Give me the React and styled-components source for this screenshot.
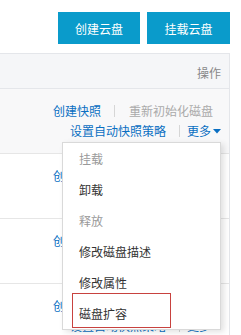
import React from "react";
import styled, { createGlobalStyle } from "styled-components";

const GlobalStyle = createGlobalStyle`
  html, body {
    margin: 0;
    padding: 0;
    background: #fff;
  }
  body {
    font-family: "Noto Sans CJK SC", "Liberation Sans", sans-serif;
    font-size: 12px;
    color: #333;
    overflow: hidden;
  }
`;

const menuItems = [
  { label: "挂载", disabled: true },
  { label: "卸载" },
  { label: "释放", disabled: true },
  { label: "修改磁盘描述" },
  { label: "修改属性" },
  { label: "磁盘扩容", marked: true },
];

function Caret() {
  return (
    <svg width="8" height="5" viewBox="0 0 8 5">
      <path d="M0 0 L8 0 L4 4.5 Z" fill="#0a6fc2" />
    </svg>
  );
}

function DiskRow({ $hover, open }) {
  return (
    <Row $hover={$hover}>
      <OpsCell>
        <Line $pr="8px">
          <Link>创建快照</Link>
          <Sep $ml="13px" $mr="14px" />
          <Muted>重新初始化磁盘</Muted>
        </Line>
        <Line>
          <Link>设置自动快照策略</Link>
          <Sep $ml="13px" $mr="7px" />
          <More>
            <Link>更多</Link>
            <Caret />
            {open && (
              <Menu>
                {menuItems.map((item) => (
                  <MenuItem key={item.label} $disabled={item.disabled}>
                    {item.label}
                    {item.marked && <Mark />}
                  </MenuItem>
                ))}
              </Menu>
            )}
          </More>
        </Line>
      </OpsCell>
    </Row>
  );
}

function App() {
  return (
    <Page>
      <GlobalStyle />
      <Toolbar>
        <Button $w="82px">创建云盘</Button>
        <Button $w="83px">挂载云盘</Button>
      </Toolbar>
      <Table>
        <Header>操作</Header>
        <DiskRow $hover open />
        <DiskRow />
        <DiskRow />
        <DiskRow />
      </Table>
    </Page>
  );
}

const Page = styled.div`
  width: 241px;
  height: 335px;
  overflow: hidden;
  position: relative;
`;

const Toolbar = styled.div`
  display: flex;
  justify-content: flex-end;
  gap: 7px;
  padding: 12px 11px 0 0;
`;

const Button = styled.div`
  width: ${(p) => p.$w};
  height: 32px;
  background: #0a9bcb;
  color: #fff;
  display: flex;
  align-items: center;
  justify-content: center;
  font-size: 12px;
`;

const Table = styled.div`
  margin: 9px 11px 0 0;
  border-right: 1px solid #e4e6ea;
`;

const Header = styled.div`
  height: 36px;
  box-sizing: border-box;
  border-top: 1px solid #e4e6ea;
  border-bottom: 1px solid #e4e6ea;
  background: #f5f6f8;
  color: #888;
  display: flex;
  align-items: center;
  justify-content: flex-end;
  padding: 3px 8px 0 0;
`;

const Row = styled.div`
  height: 65px;
  box-sizing: border-box;
  border-bottom: 1px solid #e6e6e6;
  background: ${(p) => (p.$hover ? "#f8f8f9" : "#fff")};
  padding: 12px 8px 0 0;
`;

const OpsCell = styled.div`
  display: flex;
  flex-direction: column;
  align-items: flex-end;
`;

const Line = styled.div`
  display: flex;
  align-items: center;
  height: 20px;
  line-height: 20px;
  white-space: nowrap;
  padding-right: ${(p) => p.$pr || "0px"};
`;

const Link = styled.span`
  color: #0a6fc2;
  flex: none;
`;

const Muted = styled.span`
  color: #aaa;
  flex: none;
`;

const Sep = styled.span`
  flex: none;
  width: 1px;
  height: 12px;
  background: #d6d6d6;
  margin-left: ${(p) => p.$ml};
  margin-right: ${(p) => p.$mr};
`;

const More = styled.span`
  position: relative;
  flex: none;
  display: flex;
  align-items: center;
  gap: 2px;
  height: 20px;
`;

const Menu = styled.div`
  position: absolute;
  top: 21px;
  right: 0;
  width: 159px;
  box-sizing: border-box;
  background: #fff;
  border: 1px solid #d9d9d9;
  box-shadow: 3px 2px 6px rgba(0, 0, 0, 0.12);
  z-index: 10;
`;

const MenuItem = styled.div`
  position: relative;
  height: 31px;
  line-height: 31px;
  padding-left: 16px;
  color: ${(p) => (p.$disabled ? "#999" : "#333")};
`;

const Mark = styled.span`
  position: absolute;
  left: 9px;
  top: -5px;
  width: 99px;
  height: 35px;
  box-sizing: border-box;
  border: 1px solid #c8423f;
  pointer-events: none;
`;

export default App;
